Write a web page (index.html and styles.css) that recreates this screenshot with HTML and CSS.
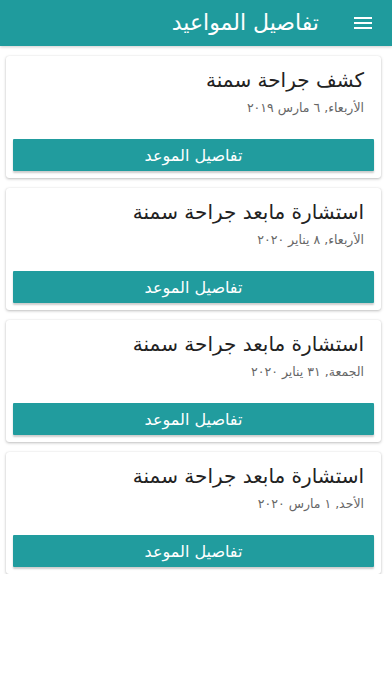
FILE: index.html
```html
<!DOCTYPE html>
<html lang="ar" dir="rtl">
<head>
<meta charset="utf-8">
<title>تفاصيل المواعيد</title>
<link rel="stylesheet" href="styles.css">
</head>
<body>
<header class="appbar">
  <span class="menu" aria-label="menu">
    <svg width="18" height="14" viewBox="0 0 18 14"><rect x="0" y="1" width="18" height="2" fill="#fff"/><rect x="0" y="6" width="18" height="2" fill="#fff"/><rect x="0" y="11" width="18" height="2" fill="#fff"/></svg>
  </span>
  <h1 class="appbar-title">تفاصيل المواعيد</h1>
</header>
<main class="list">
  <section class="card">
    <div class="card-body">
      <h2 class="card-title">كشف جراحة سمنة</h2>
      <p class="card-date">الأربعاء, ٦ مارس ٢٠١٩</p>
    </div>
    <button class="card-btn">تفاصيل الموعد</button>
  </section>
  <section class="card">
    <div class="card-body">
      <h2 class="card-title">استشارة مابعد جراحة سمنة</h2>
      <p class="card-date">الأربعاء, ٨ يناير ٢٠٢٠</p>
    </div>
    <button class="card-btn">تفاصيل الموعد</button>
  </section>
  <section class="card">
    <div class="card-body">
      <h2 class="card-title">استشارة مابعد جراحة سمنة</h2>
      <p class="card-date">الجمعة, ٣١ يناير ٢٠٢٠</p>
    </div>
    <button class="card-btn">تفاصيل الموعد</button>
  </section>
  <section class="card">
    <div class="card-body">
      <h2 class="card-title">استشارة مابعد جراحة سمنة</h2>
      <p class="card-date">الأحد, ١ مارس ٢٠٢٠</p>
    </div>
    <button class="card-btn">تفاصيل الموعد</button>
  </section>
</main>
</body>
</html>
```
FILE: styles.css
```css
html, body {
  margin: 0;
  padding: 0;
  background: #ffffff;
}
body {
  font-family: "DejaVu Sans", "Noto Sans", sans-serif;
  direction: rtl;
  width: 392px;
}
.appbar {
  height: 46px;
  background: #1f9b9d;
  display: flex;
  align-items: center;
  padding-right: 20px;
  box-sizing: border-box;
  gap: 35px;
  box-shadow: 0 1px 3px rgba(0,0,0,0.2);
}
.menu {
  display: flex;
  width: 18px;
  height: 14px;
}
.appbar-title {
  margin: 0;
  color: #ffffff;
  font-size: 22px;
  font-weight: normal;
  line-height: 28px;
}
.list {
  display: flex;
  flex-direction: column;
  gap: 10px;
  padding: 10px 11px 0 6px;
}
.card {
  height: 122px;
  box-sizing: border-box;
  background: #fff;
  border-radius: 3px;
  box-shadow: 0 1px 3px rgba(0,0,0,0.25), 0 0 1px rgba(0,0,0,0.12);
  display: flex;
  flex-direction: column;
  padding: 10px 7px 7px;
}
.card-body {
  padding: 0 10px;
}
.card-title {
  margin: 0;
  font-size: 20px;
  font-weight: normal;
  line-height: 28px;
  color: #222;
}
.card-date {
  margin: 5px 0 0;
  font-size: 12.5px;
  line-height: 18px;
  color: #666;
}
.card-btn {
  margin-top: auto;
  height: 32px;
  border: none;
  border-radius: 1px;
  background: #219c9e;
  color: #fff;
  font-family: inherit;
  font-size: 16px;
  box-shadow: 0 2px 2px rgba(0,0,0,0.2);
  padding: 0;
}
```
